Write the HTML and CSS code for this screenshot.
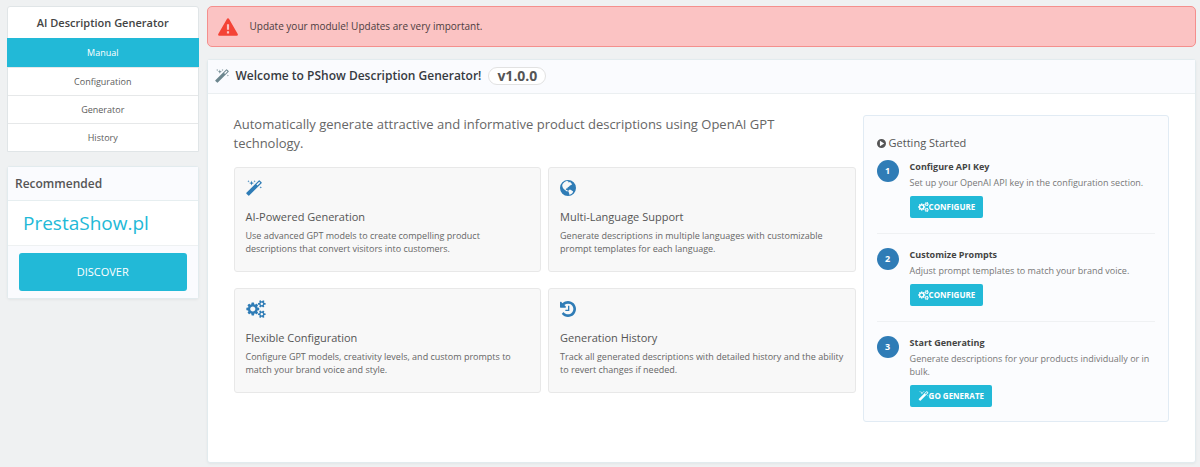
FILE: index.html
```html
<!DOCTYPE html>
<html lang="en">
<head>
  <meta charset="UTF-8">
  <meta name="viewport" content="width=device-width, initial-scale=1.0">
  <title>AI Description Generator</title>
  <link rel="stylesheet" href="styles.css">
</head>
<body>

  <svg class="sprite" aria-hidden="true">
    <symbol id="icon-magic" viewBox="64 0 1664 1664">
      <path d="M1254 581l293-293-107-107-293 293zm447-293q0 27-18 45l-1286 1286q-18 18-45 18t-45-18l-198-198q-18-18-18-45t18-45l1286-1286q18-18 45-18t45 18l198 198q18 18 18 45zm-1351-190l98 30-98 30-30 98-30-98-98-30 98-30 30-98zm350 162l196 60-196 60-60 196-60-196-196-60 196-60 60-196zm930 478l98 30-98 30-30 98-30-98-98-30 98-30 30-98zm-640-640l98 30-98 30-30 98-30-98-98-30 98-30 30-98z"/>
    </symbol>
    <symbol id="icon-cogs" viewBox="-64 0 1920 1792">
      <path d="M832 896q0-106-75-181t-181-75-181 75-75 181 75 181 181 75 181-75 75-181zm768 512q0-52-38-90t-90-38-90 38-38 90q0 53 37.5 90.5t90.5 37.5 90.5-37.5 37.5-90.5zm0-1024q0-52-38-90t-90-38-90 38-38 90q0 53 37.5 90.5t90.5 37.5 90.5-37.5 37.5-90.5zm-384 421v185q0 10-7 19.5t-16 10.5l-155 24q-11 35-32 76 34 48 90 115 7 11 7 20 0 12-7 19-23 30-82.5 89.5t-78.5 59.5q-11 0-21-7l-115-90q-37 19-77 31-11 108-23 155-7 24-30 24h-186q-11 0-20-7.5t-10-17.5l-23-153q-34-10-75-31l-118 89q-7 7-20 7-11 0-21-8-144-133-144-160 0-9 7-19 10-14 41-53t47-61q-23-44-35-82l-152-24q-10-1-17-9.5t-7-19.5v-185q0-10 7-19.5t16-10.5l155-24q11-35 32-76-34-48-90-115-7-11-7-20 0-12 7-20 22-30 82-89t79-59q11 0 21 7l115 90q34-18 77-32 11-108 23-154 7-24 30-24h186q11 0 20 7.5t10 17.5l23 153q34 10 75 31l118-89q8-7 20-7 11 0 21 8 144 133 144 160 0 8-7 19-12 16-42 54t-45 60q23 48 34 82l152 23q10 2 17 10.5t7 19.5zm640 533v140q0 16-149 31-12 27-30 52 51 113 51 138 0 4-4 7-122 71-124 71-8 0-46-47t-52-68q-20 2-30 2t-30-2q-14 21-52 68t-46 47q-2 0-124-71-4-3-4-7 0-25 51-138-18-25-30-52-149-15-149-31v-140q0-16 149-31 13-29 30-52-51-113-51-138 0-4 4-7 4-2 35-20t59-34 30-16q8 0 46 46.5t52 67.5q20-2 30-2t30 2q51-71 92-112l6-2q4 0 124 70 4 3 4 7 0 25-51 138 17 23 30 52 149 15 149 31zm0-1024v140q0 16-149 31-12 27-30 52 51 113 51 138 0 4-4 7-122 71-124 71-8 0-46-47t-52-68q-20 2-30 2t-30-2q-14 21-52 68t-46 47q-2 0-124-71-4-3-4-7 0-25 51-138-18-25-30-52-149-15-149-31v-140q0-16 149-31 13-29 30-52-51-113-51-138 0-4 4-7 4-2 35-20t59-34 30-16q8 0 46 46.5t52 67.5q20-2 30-2t30 2q51-71 92-112l6-2q4 0 124 70 4 3 4 7 0 25-51 138 17 23 30 52 149 15 149 31z"/>
    </symbol>
    <symbol id="icon-history" viewBox="128 128 1536 1536">
      <path d="M1664 896q0 156-61 298t-164 245-245 164-298 61q-172 0-327-72.5t-264-204.5q-7-10-6.5-22.5t8.5-20.5l137-138q10-9 25-9 16 2 23 12 73 95 179 147t225 52q104 0 198.5-40.5t163.5-109.5 109.5-163.5 40.5-198.5-40.5-198.5-109.5-163.5-163.5-109.5-198.5-40.5q-98 0-188 35.5t-160 101.5l137 138q31 30 14 69-17 40-59 40h-448q-26 0-45-19t-19-45v-448q0-42 40-59 39-17 69 14l130 129q107-101 244.5-156.5t284.5-55.5q156 0 298 61t245 164 164 245 61 298zm-640-288v448q0 14-9 23t-23 9h-320q-14 0-23-9t-9-23v-64q0-14 9-23t23-9h224v-352q0-14 9-23t23-9h64q14 0 23 9t9 23z"/>
    </symbol>
    <symbol id="icon-globe" viewBox="0 0 16 16">
      <path fill-rule="evenodd" d="M8 0a8 8 0 1 1 0 16A8 8 0 0 1 8 0zM2.600 3.900L4.500 2l2-.9 2 .2-.5.9 1.300.1 1-.5.5 1.200 1.400.9-.9 1.200-1.300.3-.9 1.200-1.500.8-.3 1.200-1.100-.2-.5.9.8.6.9.1.3 1.300-.7.2-1.700-1.200L3.700 9 2.600 7.200 2.200 5.400zM8.600 10.200l1.400-.6 1.800.9 1.400.9-.7 1.500-1.500 1.300-1.700.5-.2-1.800-.8-1.400z"/>
    </symbol>
    <symbol id="icon-play" viewBox="0 0 16 16">
      <path fill-rule="evenodd" d="M8 0a8 8 0 1 1 0 16A8 8 0 0 1 8 0zM5.200 3.200v9.600l7.600-4.800z"/>
    </symbol>
    <symbol id="icon-warning" viewBox="0 0 22 19">
      <path fill-rule="evenodd" d="M11 0q.8 0 1.200.7l9.500 16.500q.7 1.800-1.200 1.800h-19Q-.4 19 .3 17.200L9.800.7Q10.200 0 11 0zM9.800 6.500v6h2.400v-6zM9.800 14.200v2.400h2.400v-2.400z"/>
    </symbol>
  </svg>

  <div class="layout">
    <aside class="sidebar">
      <nav class="menu">
        <div class="menu-title">AI Description Generator</div>
        <a class="menu-item active" href="#manual">Manual</a>
        <a class="menu-item" href="#configuration">Configuration</a>
        <a class="menu-item" href="#generator">Generator</a>
        <a class="menu-item" href="#history">History</a>
      </nav>

      <section class="recommended">
        <h2 class="recommended-title">Recommended</h2>
        <div class="recommended-body"><a href="#prestashow">PrestaShow.pl</a></div>
        <div class="recommended-footer"><a class="discover" href="#discover">DISCOVER</a></div>
      </section>
    </aside>

    <main class="content">
      <div class="alert" role="alert">
        <svg class="alert-icon"><use href="#icon-warning"/></svg>
        <span>Update your module! Updates are very important.</span>
      </div>

      <section class="panel">
        <header class="panel-heading">
          <svg class="heading-icon"><use href="#icon-magic"/></svg>
          <h1>Welcome to PShow Description Generator!</h1>
          <span class="version">v1.0.0</span>
        </header>

        <div class="panel-body">
          <div class="intro">
            <p class="lead">Automatically generate attractive and informative product descriptions using OpenAI GPT technology.</p>
            <div class="features">
              <article class="feature">
                <svg class="feature-icon"><use href="#icon-magic"/></svg>
                <h3>AI-Powered Generation</h3>
                <p>Use advanced GPT models to create compelling product descriptions that convert visitors into customers.</p>
              </article>
              <article class="feature">
                <svg class="feature-icon"><use href="#icon-globe"/></svg>
                <h3>Multi-Language Support</h3>
                <p>Generate descriptions in multiple languages with customizable prompt templates for each language.</p>
              </article>
              <article class="feature">
                <svg class="feature-icon wide"><use href="#icon-cogs"/></svg>
                <h3>Flexible Configuration</h3>
                <p>Configure GPT models, creativity levels, and custom prompts to match your brand voice and style.</p>
              </article>
              <article class="feature">
                <svg class="feature-icon"><use href="#icon-history"/></svg>
                <h3>Generation History</h3>
                <p>Track all generated descriptions with detailed history and the ability to revert changes if needed.</p>
              </article>
            </div>
          </div>

          <aside class="started">
            <h3 class="started-title"><svg class="started-icon"><use href="#icon-play"/></svg>Getting Started</h3>
            <div class="step">
              <span class="step-number">1</span>
              <div class="step-text">
                <h4>Configure API Key</h4>
                <p>Set up your OpenAI API key in the configuration section.</p>
                <a class="btn" href="#configuration"><svg class="btn-icon"><use href="#icon-cogs"/></svg>CONFIGURE</a>
              </div>
            </div>
            <div class="step">
              <span class="step-number">2</span>
              <div class="step-text">
                <h4>Customize Prompts</h4>
                <p>Adjust prompt templates to match your brand voice.</p>
                <a class="btn" href="#configuration"><svg class="btn-icon"><use href="#icon-cogs"/></svg>CONFIGURE</a>
              </div>
            </div>
            <div class="step">
              <span class="step-number">3</span>
              <div class="step-text">
                <h4>Start Generating</h4>
                <p>Generate descriptions for your products individually or in bulk.</p>
                <a class="btn" href="#generator"><svg class="btn-icon"><use href="#icon-magic"/></svg>GO GENERATE</a>
              </div>
            </div>
          </aside>
        </div>
      </section>
    </main>
  </div>

</body>
</html>
```
FILE: styles.css
```css
* {
  box-sizing: border-box;
}

body {
  margin: 0;
  padding: 6px 4px 5px 7px;
  background-color: #eff1f2;
  font-family: "Open Sans", "Noto Sans", sans-serif;
  font-size: 9px;
  line-height: 13px;
  color: #666;
}

h1, h2, h3, h4, p {
  margin: 0;
}

a {
  text-decoration: none;
}

svg {
  flex: none;
  fill: currentColor;
}

.sprite {
  display: none;
}

.layout {
  display: grid;
  grid-template-columns: 6fr 31fr;
  gap: 8px;
}

/* Sidebar */
.menu {
  margin-bottom: 14px;
  border: 1px solid #e0e5e7;
  border-radius: 3px 3px 0 0;
  background-color: #fff;
  text-align: center;
}

.menu-title {
  padding: 8px 4px;
  font-size: 11px;
  line-height: 15px;
  font-weight: 600;
  color: #444;
}

.menu-item {
  display: block;
  padding: 7px 4px;
  border-top: 1px solid #e6e8e9;
  color: #5c5c5c;
}

.menu-item.active {
  margin: 0 -1px;
  padding: 8px 4px;
  border-top: 0;
  background-color: #22b9d7;
  color: #fff;
}

.recommended {
  border: 1px solid #e2ebee;
  border-radius: 3px;
  background-color: #fff;
  box-shadow: 0 1px 3px rgba(0, 0, 0, 0.05);
}

.recommended-title {
  padding: 9px 7px;
  border-bottom: 1px solid #e6eef0;
  background-color: #fafbfe;
  font-size: 12px;
  line-height: 15px;
  font-weight: 600;
  color: #555;
}

.recommended-body {
  padding: 10px 15px;
  font-size: 19px;
  line-height: 24px;
}

.recommended-body a {
  color: #22b9d7;
}

.recommended-footer {
  padding: 7px 11px;
  border-top: 1px solid #eef1f2;
  background-color: #fafbfe;
}

.discover {
  display: block;
  padding: 12px;
  border-radius: 3px;
  background-color: #22b9d7;
  color: #fff;
  font-size: 11px;
  line-height: 14px;
  text-align: center;
}

/* Main column */
.content {
  display: flex;
  flex-direction: column;
  gap: 12px;
}

.alert {
  display: flex;
  align-items: center;
  gap: 12px;
  padding: 10px;
  border: 1px solid #f48f8d;
  border-radius: 5px;
  background-color: #fbc3c3;
  color: #4c3c3e;
  font-size: 10px;
  line-height: 19px;
}

.alert-icon {
  width: 20px;
  height: 18px;
  color: #f44336;
}

.panel {
  min-height: 404px;
  border: 1px solid #e2ebee;
  border-radius: 3px;
  background-color: #fff;
  box-shadow: 0 1px 3px rgba(0, 0, 0, 0.05);
}

.panel-heading {
  display: flex;
  align-items: center;
  gap: 7px;
  padding: 7px 7px 8px;
  border-bottom: 1px solid #ebeff1;
  background-color: #fafbfe;
}

.panel-heading h1 {
  font-size: 12px;
  line-height: 18px;
  font-weight: 600;
  color: #363a41;
}

.heading-icon {
  width: 14px;
  height: 14px;
  color: #6c868e;
}

.version {
  padding: 0 8px;
  border: 1px solid #e2e2e2;
  border-radius: 9px;
  background-color: #fff;
  font-size: 14px;
  line-height: 16px;
  font-weight: 700;
  color: #555;
}

.panel-body {
  display: grid;
  grid-template-columns: 67fr 33fr;
  gap: 7px;
  padding: 21px 26px;
}

.lead {
  margin-bottom: 14px;
  padding-right: 24px;
  font-size: 13px;
  line-height: 19px;
}

.features {
  display: grid;
  grid-template-columns: 1fr 1fr;
  gap: 16px 7px;
}

.feature {
  padding: 11px 11px 16px;
  border: 1px solid #e8e8e8;
  border-radius: 3px;
  background-color: #f8f8f8;
}

.feature-icon {
  display: block;
  width: 16px;
  height: 18px;
  margin-bottom: 12px;
  color: #2f7cb6;
}

.feature-icon.wide {
  width: 20px;
}

.feature h3,
.started-title {
  margin-bottom: 4px;
  font-size: 11px;
  line-height: 16px;
  font-weight: 400;
  color: #555;
}

/* Getting started */
.started {
  padding: 19px 13px 14px;
  border: 1px solid #e1ebf4;
  border-radius: 3px;
  background-color: #fbfcfe;
}

.started-title {
  display: flex;
  align-items: center;
  gap: 3px;
  margin-bottom: 9px;
}

.started-icon {
  width: 9px;
  height: 9px;
}

.step {
  display: flex;
  gap: 11px;
  margin-bottom: 14px;
  padding-bottom: 15px;
  border-bottom: 1px solid #eff1f3;
}

.step:last-child {
  margin-bottom: 0;
  padding-bottom: 0;
  border-bottom: 0;
}

.step-number {
  flex: none;
  width: 22px;
  height: 22px;
  border-radius: 50%;
  background-color: #2f7cb6;
  color: #fff;
  font-weight: 700;
  line-height: 22px;
  text-align: center;
}

.step h4 {
  margin-bottom: 3px;
  font-size: 9px;
  line-height: 13px;
  font-weight: 700;
  color: #444;
}

.step p {
  margin-bottom: 7px;
  color: #777;
}

.btn {
  display: inline-flex;
  align-items: center;
  padding: 4px 8px;
  border-radius: 2px;
  background-color: #22b9d7;
  color: #fff;
  font-size: 8px;
  line-height: 14px;
  font-weight: 700;
}

.btn-icon {
  width: 11px;
  height: 10px;
}
```
